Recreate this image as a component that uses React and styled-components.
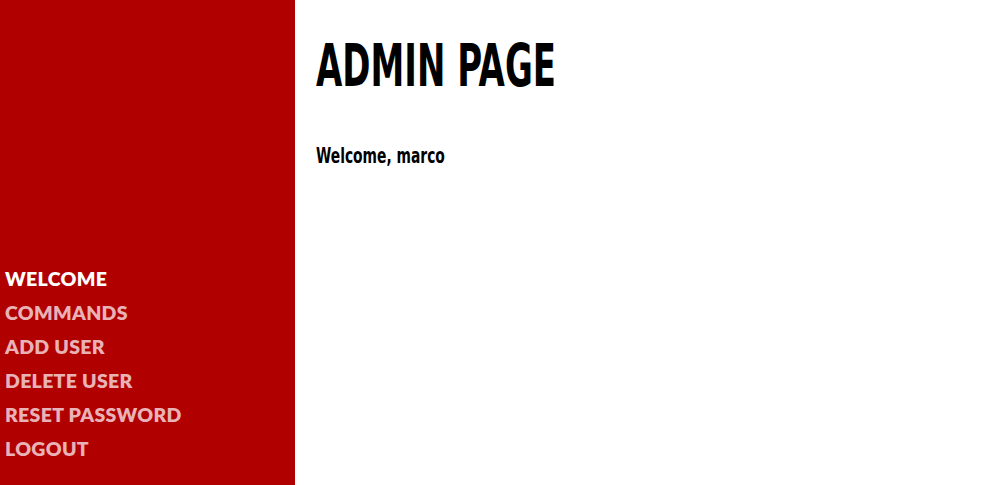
import React from 'react';
import styled, { createGlobalStyle } from 'styled-components';

const GlobalStyle = createGlobalStyle`
  html, body, #root {
    margin: 0;
    height: 100%;
  }
  body {
    font-family: 'Lato', 'Noto Sans', sans-serif;
    background: #fff;
  }
`;

const links = ['Welcome', 'Commands', 'Add user', 'Delete user', 'Reset password', 'Logout'];

const App = () => {
  return (
    <Layout>
      <GlobalStyle />
      <Sidebar>
        <Nav>
          {links.map((l, i) => (
            <NavLink key={l} href="#" $active={i === 0}>
              {l}
            </NavLink>
          ))}
        </Nav>
      </Sidebar>
      <Main>
        <Title>Admin page</Title>
        <Greeting>Welcome, marco</Greeting>
      </Main>
    </Layout>
  );
};

const Layout = styled.div`
  display: flex;
  height: 100vh;
`;

const Sidebar = styled.aside`
  width: 295px;
  flex-shrink: 0;
  background: #b00000;
  display: flex;
  flex-direction: column;
  justify-content: flex-end;
  padding-bottom: 19px;
  box-sizing: border-box;
`;

const Nav = styled.nav`
  display: flex;
  flex-direction: column;
  padding-left: 5px;
`;

const NavLink = styled.a`
  display: block;
  height: 34px;
  line-height: 34px;
  font-size: 19.5px;
  font-weight: 800;
  text-transform: uppercase;
  text-decoration: none;
  letter-spacing: 0.3px;
  color: ${(p) => (p.$active ? '#fff' : '#e8b2b6')};
`;

const Main = styled.main`
  flex: 1;
  padding: 26px 21px;
`;

const Title = styled.h1`
  margin: 0;
  font-family: 'DejaVu Sans Condensed', 'DejaVu Sans', sans-serif;
  font-weight: 700;
  font-size: 59px;
  line-height: 80px;
  text-transform: uppercase;
  transform: scaleX(0.64);
  transform-origin: left center;
  white-space: nowrap;
`;

const Greeting = styled.h2`
  margin: 37px 0 0;
  font-family: 'DejaVu Sans Condensed', 'DejaVu Sans', sans-serif;
  font-weight: 700;
  font-size: 22px;
  transform: scaleX(0.7);
  transform-origin: left center;
  white-space: nowrap;
`;

export default App;
